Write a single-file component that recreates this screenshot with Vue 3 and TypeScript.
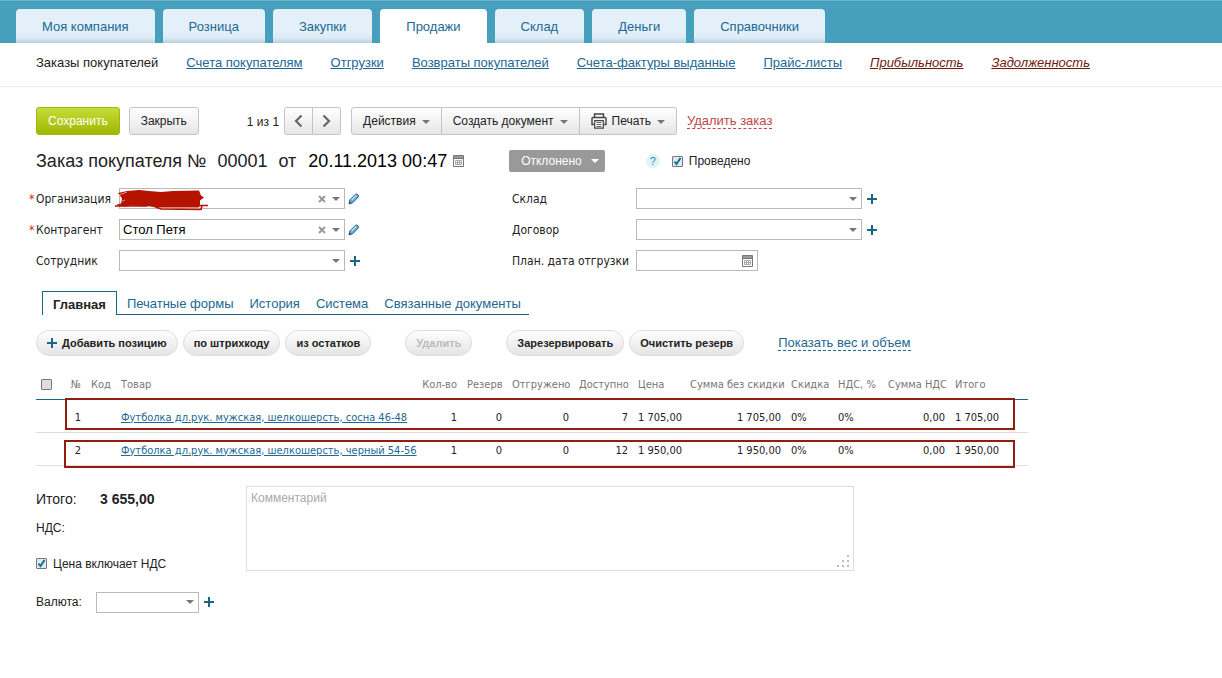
<script setup lang="ts">
import { ref } from 'vue'

interface NavLink { label: string; report?: boolean }
interface Position {
  id: number; name: string; qty: string; reserve: string; shipped: string
  available: string; price: string; sum: string; discount: string
  vat: string; vatSum: string; total: string
}

const sections = ['Моя компания', 'Розница', 'Закупки', 'Продажи', 'Склад', 'Деньги', 'Справочники']
const activeSection = ref('Продажи')

const links: NavLink[] = [
  { label: 'Счета покупателям' },
  { label: 'Отгрузки' },
  { label: 'Возвраты покупателей' },
  { label: 'Счета-фактуры выданные' },
  { label: 'Прайс-листы' },
  { label: 'Прибыльность', report: true },
  { label: 'Задолженность', report: true },
]

const docTabs = ['Главная', 'Печатные формы', 'История', 'Система', 'Связанные документы']
const activeTab = ref('Главная')

const organization = ref('')
const contractor = ref('Стол Петя')
const posted = ref(true)
const vatIncluded = ref(true)
const comment = ref('')

const positions: Position[] = [
  { id: 1, name: 'Футболка дл.рук. мужская, шелкошерсть, сосна 46-48', qty: '1', reserve: '0', shipped: '0', available: '7', price: '1 705,00', sum: '1 705,00', discount: '0%', vat: '0%', vatSum: '0,00', total: '1 705,00' },
  { id: 2, name: 'Футболка дл.рук. мужская, шелкошерсть, черный 54-56', qty: '1', reserve: '0', shipped: '0', available: '12', price: '1 950,00', sum: '1 950,00', discount: '0%', vat: '0%', vatSum: '0,00', total: '1 950,00' },
]
</script>

<template>
  <div class="page">
    <header class="top">
      <nav class="sections" aria-label="Разделы">
        <button v-for="s in sections" :key="s" type="button" class="section" :class="{ active: s === activeSection }" @click="activeSection = s">{{ s }}</button>
      </nav>
    </header>
    <nav class="subnav" aria-label="Документы">
      <span class="current">Заказы покупателей</span>
      <a v-for="l in links" :key="l.label" href="#" :class="{ report: l.report }">{{ l.label }}</a>
    </nav>

    <main class="content">
      <div class="toolbar">
        <button type="button" class="btn save">Сохранить</button>
        <button type="button" class="btn close">Закрыть</button>
        <span class="counter">1 из 1</span>
        <div class="group pager">
          <button type="button" class="btn" aria-label="Предыдущий">
            <svg width="9" height="14" viewBox="0 0 9 14"><path d="M7.5 1.5 2 7l5.500 5.500" fill="none" stroke="#666" stroke-width="2.200" /></svg>
          </button>
          <button type="button" class="btn" aria-label="Следующий">
            <svg width="9" height="14" viewBox="0 0 9 14"><path d="M1.500 1.500 7 7l-5.500 5.500" fill="none" stroke="#666" stroke-width="2.200" /></svg>
          </button>
        </div>
        <div class="group actions">
          <button type="button" class="btn">Действия<i class="caret" /></button>
          <button type="button" class="btn">Создать документ<i class="caret" /></button>
          <button type="button" class="btn">
            <svg class="printer" width="16" height="16" viewBox="0 0 16 16">
              <path d="M3.500 4V1h9v3M3 11.500H1V5.500q0-1 1-1h12q1 0 1 1v6h-2" fill="none" stroke="#444" stroke-width="1.400" />
              <path d="M3.700 7.700h8.600v7.500H3.700z" fill="#fff" stroke="#444" stroke-width="1.200" />
              <path d="M5.500 9.500h5M5.500 11.500h5M5.500 13.500h5" stroke="#555" stroke-width=".9" />
            </svg>Печать<i class="caret" />
          </button>
        </div>
        <a href="#" class="delete">Удалить заказ</a>
      </div>

      <div class="heading">
        <h1>Заказ покупателя №</h1>
        <span class="number">00001</span>
        <span class="from">от</span>
        <time class="date" datetime="2013-11-20T00:47">20.11.2013 00:47</time>
        <button type="button" class="icon-btn cal" aria-label="Выбрать дату">
          <svg width="11" height="12" viewBox="0 0 11 12"><path d="M.5.5h10v11H.5z" fill="#fff" stroke="#777" /><path d="M1 1h9v2H1z" fill="#999" /><path d="M.5 3.500h10" stroke="#777" /><path d="M2.500 5.500h6v4h-6zM4.500 5.500v4M6.500 5.500v4M2.500 7.500h6" fill="none" stroke="#aaa" /></svg>
        </button>
        <button type="button" class="status">Отклонено<i class="caret light" /></button>
        <button type="button" class="help" aria-label="Справка">?</button>
        <label class="check"><input v-model="posted" type="checkbox"><span>Проведено</span></label>
      </div>

      <div class="form">
        <div class="column">
          <div class="row">
            <label for="org"><b>*</b>Организация</label>
            <div class="combo">
              <input id="org" v-model="organization" type="text">
              <button type="button" class="icon-btn" aria-label="Очистить"><svg width="8" height="8" viewBox="0 0 8 8"><path d="m1 1 6 6m0-6L1 7" stroke="#999" stroke-width="2" /></svg></button>
              <button type="button" class="icon-btn" aria-label="Открыть список"><i class="caret" /></button>
              <svg class="scribble" width="94" height="22" viewBox="0 0 94 22">
                <path d="M3 4 12 2l12-1 10 1 12 1 12-1 26-.5 2 5 3 2-4 3v4l-1 3-40 0-9-1-18-1-8 1-7-1 0-1 4-1 1-5-2-3z" fill="#b51200" />
                <path d="M0 17h32M38 17l8 3 40 .5 1-4M80 16.500h13" fill="none" stroke="#b51200" stroke-width="1.600" />
                <path d="M4 6l8-3M5 13l5-2" stroke="#e8b5ae" stroke-width=".8" />
              </svg>
            </div>
            <button type="button" class="icon-btn" aria-label="Изменить организацию">
              <svg width="12" height="12" viewBox="0 0 12 12"><path d="m1 11 .8-4L7.500 1.300q1-.9 2.300.3t.5 2.400L4.800 9.700z" fill="#66b1dc" stroke="#2c6180" /><path d="m3.500 7 4.500-4.500" stroke="#b8e2f7" stroke-width="1.200" /><path d="m1 11 .5-2.500L3.300 10z" fill="#244f69" /></svg>
            </button>
          </div>
          <div class="row">
            <label for="agent"><b>*</b>Контрагент</label>
            <div class="combo">
              <input id="agent" v-model="contractor" type="text">
              <button type="button" class="icon-btn" aria-label="Очистить"><svg width="8" height="8" viewBox="0 0 8 8"><path d="m1 1 6 6m0-6L1 7" stroke="#999" stroke-width="2" /></svg></button>
              <button type="button" class="icon-btn" aria-label="Открыть список"><i class="caret" /></button>
            </div>
            <button type="button" class="icon-btn" aria-label="Изменить контрагента">
              <svg width="12" height="12" viewBox="0 0 12 12"><path d="m1 11 .8-4L7.500 1.300q1-.9 2.300.3t.5 2.400L4.800 9.700z" fill="#66b1dc" stroke="#2c6180" /><path d="m3.500 7 4.500-4.500" stroke="#b8e2f7" stroke-width="1.200" /><path d="m1 11 .5-2.500L3.300 10z" fill="#244f69" /></svg>
            </button>
          </div>
          <div class="row">
            <label for="employee"><b />Сотрудник</label>
            <div class="combo"><select id="employee"><option /></select><i class="caret" /></div>
            <button type="button" class="icon-btn plus" aria-label="Добавить сотрудника" />
          </div>
        </div>
        <div class="column second">
          <div class="row">
            <label for="store">Склад</label>
            <div class="combo"><select id="store"><option /></select><i class="caret" /></div>
            <button type="button" class="icon-btn plus" aria-label="Добавить склад" />
          </div>
          <div class="row">
            <label for="contract">Договор</label>
            <div class="combo"><select id="contract"><option /></select><i class="caret" /></div>
            <button type="button" class="icon-btn plus" aria-label="Добавить договор" />
          </div>
          <div class="row">
            <label for="ship">План. дата отгрузки</label>
            <div class="combo short">
              <input id="ship" type="text">
              <button type="button" class="icon-btn cal" aria-label="Выбрать дату">
                <svg width="11" height="12" viewBox="0 0 11 12"><path d="M.5.5h10v11H.5z" fill="#fff" stroke="#777" /><path d="M1 1h9v2H1z" fill="#999" /><path d="M.5 3.500h10" stroke="#777" /><path d="M2.500 5.500h6v4h-6zM4.500 5.500v4M6.500 5.500v4M2.500 7.500h6" fill="none" stroke="#aaa" /></svg>
              </button>
            </div>
          </div>
        </div>
      </div>

      <div class="tabs" role="tablist">
        <button v-for="t in docTabs" :key="t" type="button" role="tab" :aria-selected="t === activeTab" :class="{ active: t === activeTab }" @click="activeTab = t">{{ t }}</button>
      </div>

      <div class="pills">
        <button type="button" class="pill"><i class="plus" />Добавить позицию</button>
        <button type="button" class="pill">по штрихкоду</button>
        <button type="button" class="pill">из остатков</button>
        <button type="button" class="pill apart" disabled>Удалить</button>
        <button type="button" class="pill apart">Зарезервировать</button>
        <button type="button" class="pill">Очистить резерв</button>
        <a href="#" class="weight">Показать вес и объем</a>
      </div>

      <div class="positions">
        <table>
          <colgroup>
            <col class="w-check"><col class="w-num"><col class="w-code"><col><col class="w-qty"><col class="w-reserve"><col class="w-shipped"><col class="w-avail"><col class="w-price"><col class="w-sum"><col class="w-disc"><col class="w-vat"><col class="w-vatsum"><col class="w-total">
          </colgroup>
          <thead>
            <tr>
              <th><input type="checkbox" aria-label="Выбрать все"></th>
              <th class="num">№</th><th>Код</th><th>Товар</th>
              <th class="num">Кол-во</th><th class="num">Резерв</th><th class="num">Отгружено</th><th class="num">Доступно</th>
              <th>Цена</th><th class="num">Сумма без скидки</th><th>Скидка</th><th>НДС, %</th><th class="num">Сумма НДС</th><th>Итого</th>
            </tr>
          </thead>
          <tbody>
            <tr v-for="p in positions" :key="p.id">
              <td /><td class="num">{{ p.id }}</td><td />
              <td><a href="#">{{ p.name }}</a></td>
              <td class="num">{{ p.qty }}</td><td class="num">{{ p.reserve }}</td><td class="num">{{ p.shipped }}</td><td class="num">{{ p.available }}</td>
              <td>{{ p.price }}</td><td class="num">{{ p.sum }}</td><td>{{ p.discount }}</td><td>{{ p.vat }}</td><td class="num">{{ p.vatSum }}</td><td>{{ p.total }}</td>
            </tr>
          </tbody>
        </table>
        <div class="mark first" />
        <div class="mark last" />
      </div>

      <div class="summary">
        <div class="totals">
          <div class="grand"><span>Итого:</span><strong>3 655,00</strong></div>
          <div class="vat">НДС:</div>
          <label class="check"><input v-model="vatIncluded" type="checkbox"><span>Цена включает НДС</span></label>
          <div class="currency">
            <label for="currency">Валюта:</label>
            <div class="combo"><select id="currency"><option /></select><i class="caret" /></div>
            <button type="button" class="icon-btn plus" aria-label="Добавить валюту" />
          </div>
        </div>
        <div class="comment">
          <textarea v-model="comment" placeholder="Комментарий" aria-label="Комментарий" />
          <svg class="grip" width="12" height="12" viewBox="0 0 12 12"><path d="M10 0h2v2h-2zM5 5h2v2H5zM10 5h2v2h-2zM0 10h2v2H0zM5 10h2v2H5zM10 10h2v2h-2z" fill="#bbb" /></svg>
        </div>
      </div>
    </main>
  </div>
</template>

<style>
body { margin: 0; background: #fff; }
</style>

<style scoped>
.page { font: 13px/16px "Liberation Sans", Arial, sans-serif; color: #222; }
.page *, .page *::before, .page *::after { box-sizing: border-box; }
button, input, select, textarea { font: inherit; color: inherit; margin: 0; }
button { cursor: pointer; }
a { color: #226893; }

.top { height: 43px; padding: 8px 16px 0; background: #479fbe; border-top: 1px solid #6bb2cb; }
.sections { display: flex; gap: 8px; height: 34px; }
.section { padding: 2px 26px 0; border: 0; border-radius: 4px 4px 0 0; background: linear-gradient(#e3f0f9 70%, #dcebf4 85%, #b9cfdd); color: #226893; white-space: nowrap; }
.section.active { background: #fff; }

.subnav { display: flex; gap: 28px; height: 44px; padding: 12px 36px 0; border-bottom: 1px solid #e3eef6; white-space: nowrap; }
.subnav a.report { color: #701a10; font-style: italic; }

.content { padding: 20px 36px 0; }
.toolbar { display: flex; align-items: center; height: 28px; white-space: nowrap; }
.btn { display: flex; align-items: center; justify-content: center; height: 28px; padding: 0 11px; border: 1px solid #c4c4c4; border-radius: 3px; background: linear-gradient(#fff, #e6e6e6); font-size: 12px; }
.save { border-color: #9fb910; background: linear-gradient(#c6dc3a, #9fb800); color: #fff; }
.close { margin-left: 9px; }
.counter { margin: 2px 5px 0 48px; font-size: 12px; }
.group { display: flex; }
.group .btn { border-radius: 0; }
.group .btn + .btn { border-left: 0; }
.group .btn:first-child { border-radius: 3px 0 0 3px; }
.group .btn:last-child { border-radius: 0 3px 3px 0; }
.pager .btn { width: 28px; padding: 0; }
.pager .btn:first-child { width: 29px; }
.actions { margin: 0 10px; }
.printer { margin-right: 5px; }
.caret { flex: none; width: 0; height: 0; border: 4px solid transparent; border-bottom: 0; border-top-color: #777; }
.btn .caret { margin: 2px 0 0 6px; }
.delete { color: #c04848; text-decoration: none; border-bottom: 1px dashed #c04848; line-height: 15px; }

.heading { display: flex; align-items: center; height: 22px; margin-top: 15px; font-size: 18px; line-height: 22px; white-space: nowrap; }
.heading h1 { margin: 0; font-size: 18px; font-weight: 400; }
.number { margin-left: 11px; }
.from { margin: 0 12px 0 11px; }
.date { color: #000; }
.icon-btn { display: flex; flex: none; align-items: center; justify-content: center; padding: 0; border: 0; background: none; }
.heading .cal { margin-left: 6px; }
.status { display: flex; align-items: center; height: 22px; margin-left: 45px; padding: 0 6px 0 12px; border: 0; border-radius: 2px; background: #999; color: #fff; font-size: 12px; }
.caret.light { margin-left: 9px; border-top-color: #fff; }
.help { width: 14px; height: 14px; margin-left: 41px; padding: 0; border: 0; border-radius: 50%; background: #e0f2fa; color: #2a8fb8; font-size: 11px; line-height: 14px; }
.check { display: flex; align-items: center; gap: 6px; font-size: 12px; line-height: 16px; }
.heading .check { margin-left: 12px; }
input[type="checkbox"] { appearance: none; flex: none; width: 11px; height: 11px; border: 1px solid #777; border-radius: 1px; background: #ddd; }
input[type="checkbox"]:checked { background: #dfeaf0 url('data:image/svg+xml,<svg xmlns="http://www.w3.org/2000/svg" viewBox="0 0 9 9"><path d="m1.500 4.500 2 2.500L7.500 1" fill="none" stroke="%2318708f" stroke-width="2"/></svg>'); }

.form { display: flex; margin: 16px 0 0 -7px; font: 12px/16px "DejaVu Sans Condensed", Tahoma, sans-serif; }
.column { display: flex; flex-direction: column; gap: 10px; width: 483px; }
.row { display: flex; align-items: center; height: 21px; }
.row label { display: flex; width: 90px; white-space: nowrap; }
.second .row label { width: 124px; }
.row label b { width: 7px; color: #d22; font-weight: 400; }
.combo { position: relative; display: flex; align-items: center; gap: 6px; width: 226px; height: 21px; padding-right: 4px; border: 1px solid #b9b9b9; background: #fff; }
.combo.short { width: 122px; }
.combo input { flex: 1; min-width: 0; height: 19px; padding: 0 3px; border: 0; background: none; color: #000; font: 13px/16px "Liberation Sans", Arial, sans-serif; outline: 0; }
.combo select { flex: 1; min-width: 0; height: 19px; border: 0; background: none; appearance: none; outline: 0; }
.row > .icon-btn { margin-left: 3px; }
.scribble { position: absolute; left: -5px; top: 0; }
.plus { position: relative; flex: none; width: 10px; height: 10px; background: linear-gradient(#1c6487, #1c6487) center / 10px 2px no-repeat, linear-gradient(#1c6487, #1c6487) center / 2px 10px no-repeat; }
.row > .plus { margin-left: 5px; }

.tabs { display: inline-flex; height: 24px; margin: 20px 0 0 6px; vertical-align: top; white-space: nowrap; border-bottom: 1px solid #1c6487; }
.tabs button { padding: 2px 8px 0; border: 0; background: none; color: #226893; }
.tabs .active { height: 24px; margin-right: 2px; padding: 2px 10px 0; border: 1px solid #1c6487; border-bottom: 0; background: #fff; color: #222; font-weight: 700; }

.pills { display: flex; gap: 5px; margin-top: 15px; white-space: nowrap; }
.pill { display: flex; align-items: center; height: 26px; padding: 0 10px; border: 1px solid #ddd; border-radius: 13px; background: linear-gradient(#fff, #e4e4e4); font-size: 11px; font-weight: 700; }
.pill .plus { margin-right: 5px; }
.pill.apart { margin-left: 29px; }
.pill:disabled { color: #bbb; }
.weight { align-self: center; margin-left: 29px; line-height: 15px; text-decoration: none; border-bottom: 1px dashed #226893; }

.positions { position: relative; margin: 13px 158px 0 0; }
table { width: 100%; table-layout: fixed; border-collapse: collapse; font: 11px/14px "DejaVu Sans Condensed", Tahoma, sans-serif; }
th, td { padding: 2px 5px 0; text-align: left; white-space: nowrap; }
th { height: 30px; border-bottom: 1px solid #1c6487; color: #777; font-weight: 400; }
td { height: 33px; padding-top: 4px; border-bottom: 1px solid #ddd; }
th input { display: block; }
.num { text-align: right; }
.w-check { width: 28px; } .w-num { width: 22px; } .w-code { width: 30px; } .w-qty { width: 46px; } .w-reserve { width: 45px; }
.w-shipped { width: 67px; } .w-avail { width: 59px; } .w-price { width: 52px; } .w-sum { width: 101px; } .w-disc { width: 47px; }
.w-vat { width: 50px; } .w-vatsum { width: 67px; } .w-total { width: 78px; }
.mark { position: absolute; left: 29px; right: 13px; border: 2px solid #941b10; pointer-events: none; }
.mark.first { top: 29px; height: 32px; }
.mark.last { top: 71px; height: 28px; left: 28px; }

.summary { display: flex; margin-top: 20px; }
.totals { width: 210px; font-size: 12px; }
.grand { display: flex; align-items: center; height: 26px; font-size: 14px; }
.grand span { width: 64px; }
.vat { margin-top: 8px; }
.totals .check { margin-top: 20px; }
.currency { display: flex; align-items: center; margin-top: 20px; }
.currency label { width: 60px; }
.currency .combo { width: 103px; }
.currency .plus { margin-left: 5px; }
.comment { position: relative; flex: 1; max-width: 608px; height: 85px; }
.comment textarea { display: block; width: 100%; height: 100%; padding: 3px 4px; border: 1px solid #ddd; background: #fff; font-size: 12px; line-height: 16px; resize: none; outline: 0; }
.comment textarea::placeholder { color: #aaa; opacity: 1; }
.grip { position: absolute; right: 5px; bottom: 4px; pointer-events: none; }
</style>
